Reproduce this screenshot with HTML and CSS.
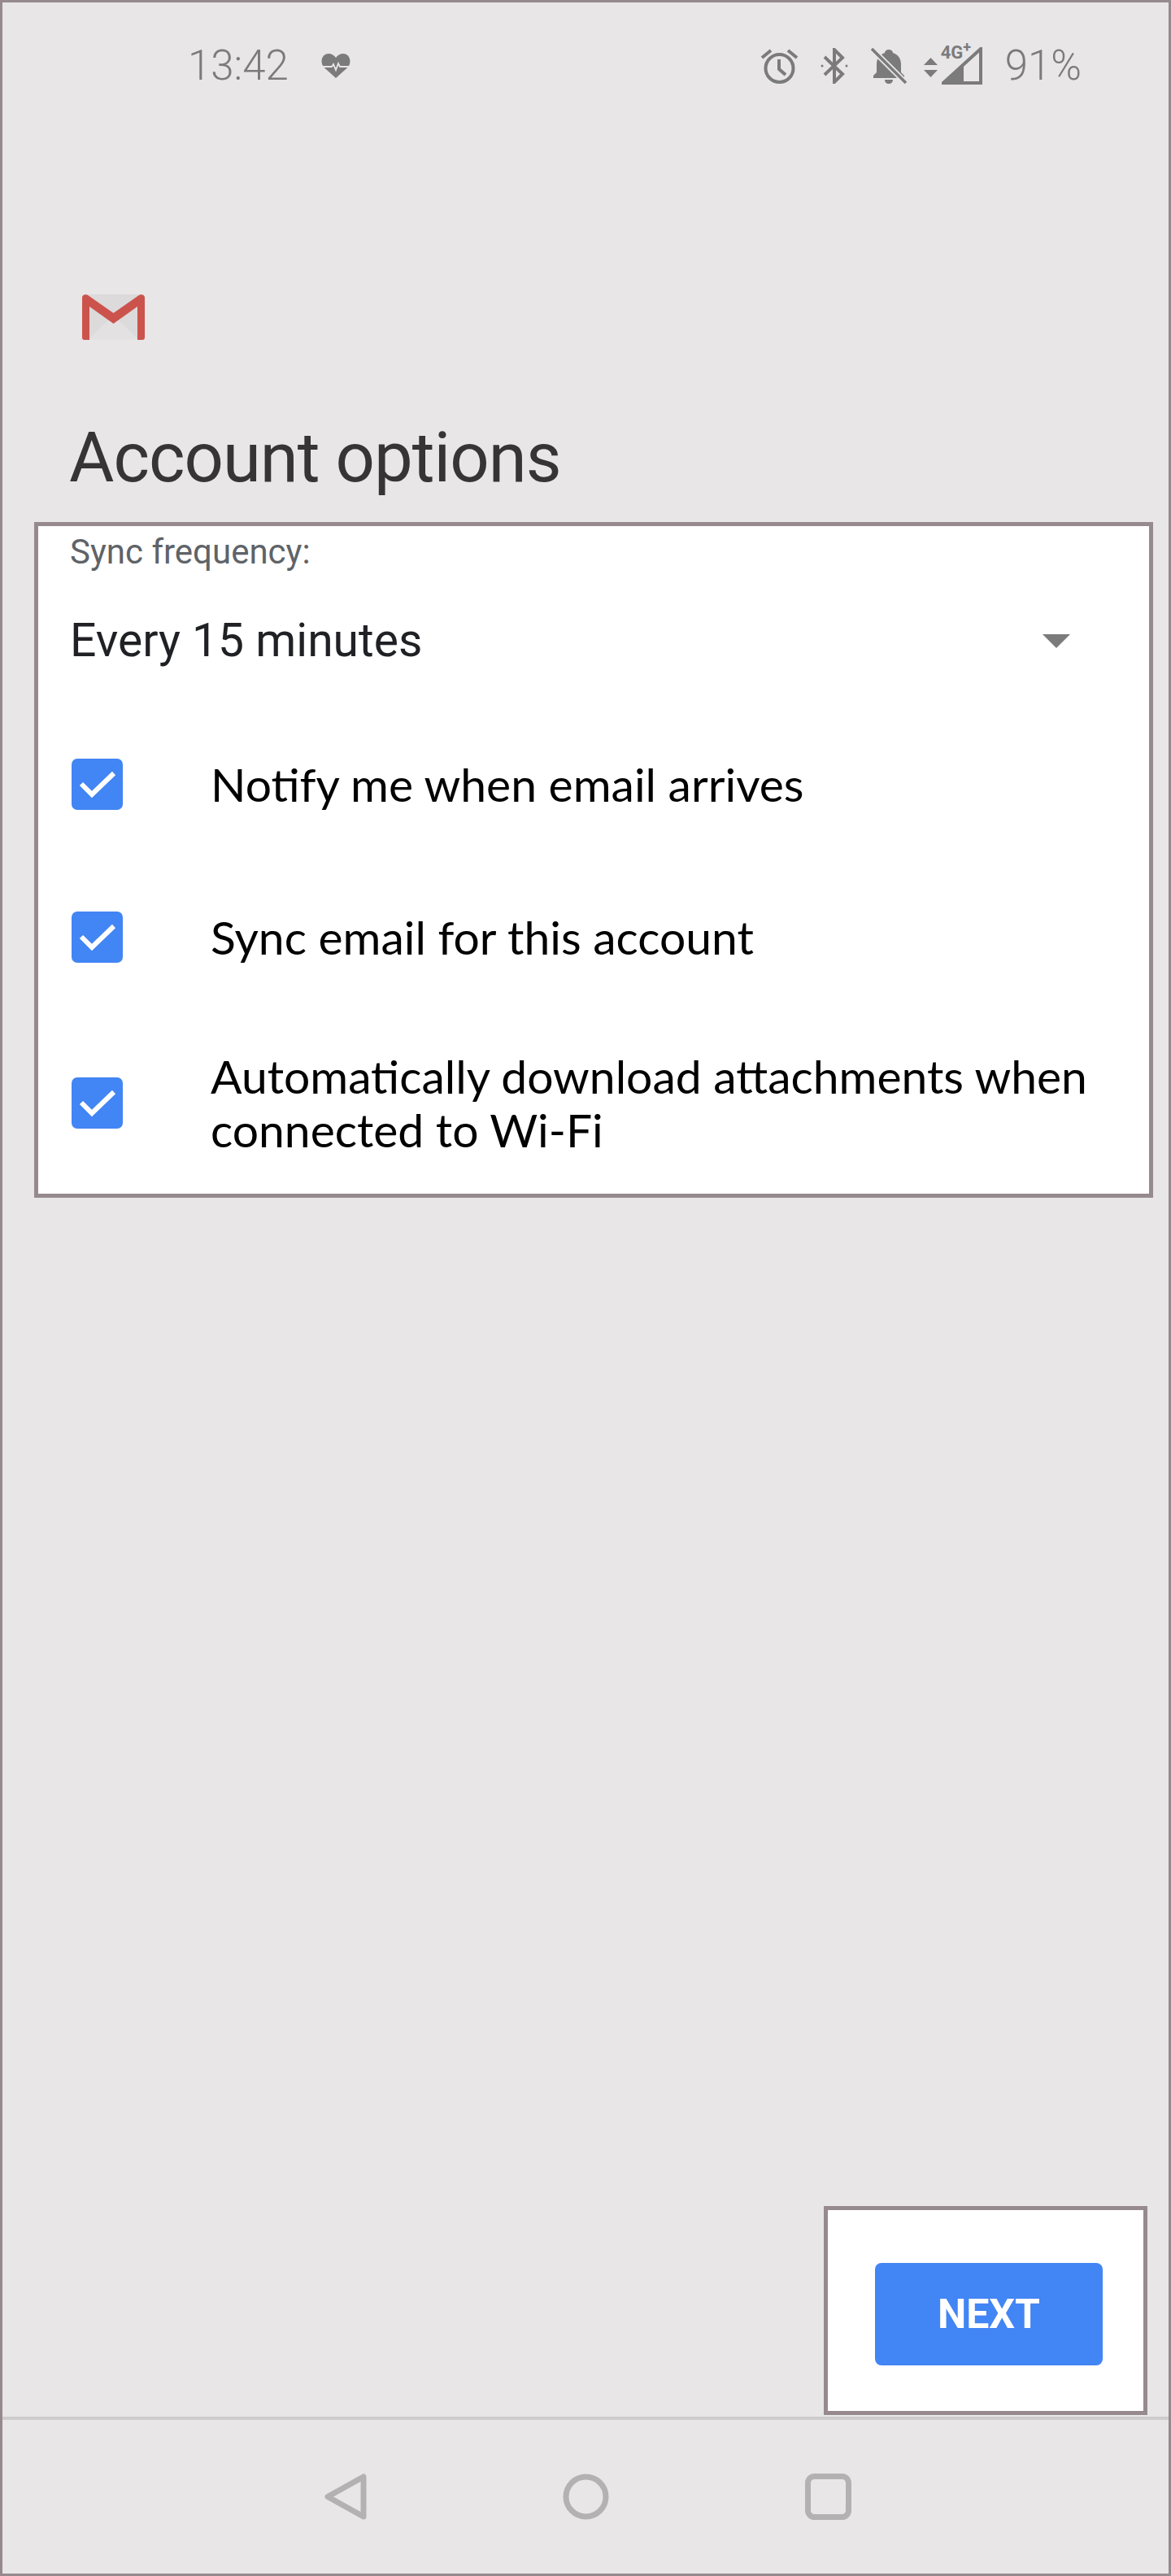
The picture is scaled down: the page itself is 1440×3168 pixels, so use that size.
FILE: index.html
```html
<!DOCTYPE html>
<html lang="en">
<head>
    <meta charset="UTF-8">
    <meta name="viewport" content="width=device-width, initial-scale=1.0">
    <title>Account options</title>
    <link rel="stylesheet" href="styles.css">
</head>
<body>
    <div class="screen">
        <!-- Status bar -->
        <div class="status-bar">
            <div class="status-left">
                <span class="status-text">13:42</span>
                <svg class="icon-heart" viewBox="0 0 36 32">
                    <path d="M18 31 3 17.500C-2 11 1 1 9 1c4 0 7 2 9 5 2-3 5-5 9-5 8 0 11 10 6 16.500z" fill="#7b7b7b"/>
                    <path d="M1 17h12l2-3 3 7 3-8 2 4h14" fill="none" stroke="#e8e6e7" stroke-width="1.800"/>
                </svg>
            </div>
            <div class="status-right">
                <svg class="icon-alarm" viewBox="0 0 47 44" fill="none" stroke="#7b7b7b" stroke-width="4">
                    <circle cx="23.500" cy="25" r="17"/>
                    <path d="M23 14v12l8 7M2 12 13 3M45 12 34 3"/>
                </svg>
                <svg class="icon-bt" viewBox="0 0 36 44" fill="none" stroke="#7b7b7b" stroke-width="4">
                    <path d="M6 11 28 32 18 42V2l10 10L6 33"/>
                    <circle cx="3" cy="22" r="1.500" fill="#7b7b7b" stroke="none"/>
                    <circle cx="33" cy="22" r="1.500" fill="#7b7b7b" stroke="none"/>
                </svg>
                <svg class="icon-bell" viewBox="0 0 44 44">
                    <path d="M22 2c-3 0-5 2-5 4-7 2-10 8-10 14v10l-4 4v3h38v-3l-4-4V20c0-6-3-12-10-14 0-2-2-4-5-4zM17 39h10c0 3-2 5-5 5s-5-2-5-5z" fill="#7b7b7b"/>
                    <path d="M2 2 42 42" stroke="#e8e6e7" stroke-width="7"/>
                    <path d="M1 1 43 43" stroke="#7b7b7b" stroke-width="3.500"/>
                </svg>
                <div class="signal">
                    <svg class="icon-arrows" viewBox="0 0 17 24">
                        <path d="M8.500 0 17 9H0zM8.500 24 0 15h17z" fill="#7b7b7b"/>
                    </svg>
                    <div class="signal-bars">
                        <span class="network">4G<sup>+</sup></span>
                        <svg class="icon-signal" viewBox="0 0 50 46">
                            <path d="M48 2v42H2z" fill="none" stroke="#7b7b7b" stroke-width="4"/>
                            <path d="M2 44 27 20v24z" fill="#7b7b7b"/>
                        </svg>
                    </div>
                </div>
                <span class="status-text">91%</span>
            </div>
        </div>

        <!-- Header -->
        <svg class="gmail-logo" viewBox="0 0 77 56">
            <rect x="0" y="0" width="77" height="56" rx="3" fill="#dcdada"/>
            <path d="M7 56 38.500 26 70 56z" fill="#e3e1e1"/>
            <path d="M0 4V53c0 2 1 3 3 3H9V15l29.500 21L68 15V56h6c2 0 3-1 3-3V4c0-3-4-5-7-3L38.500 23 7 1C4-1 0 1 0 4z" fill="#cb534c"/>
        </svg>
        <h1 class="title">Account options</h1>

        <!-- Options card -->
        <div class="options-card">
            <div class="sync-label">Sync frequency:</div>
            <div class="sync-select">
                <span>Every 15 minutes</span>
                <div class="select-arrow"></div>
            </div>
            <div class="option-row first">
                <div class="checkbox"><svg viewBox="0 0 63 63"><path d="M12 31 25 44 52 18" fill="none" stroke="#fff" stroke-width="6"/></svg></div>
                <div class="option-text">Notify me when email arrives</div>
            </div>
            <div class="option-row second">
                <div class="checkbox"><svg viewBox="0 0 63 63"><path d="M12 31 25 44 52 18" fill="none" stroke="#fff" stroke-width="6"/></svg></div>
                <div class="option-text">Sync email for this account</div>
            </div>
            <div class="option-row third">
                <div class="checkbox"><svg viewBox="0 0 63 63"><path d="M12 31 25 44 52 18" fill="none" stroke="#fff" stroke-width="6"/></svg></div>
                <div class="option-text">Automatically download attachments when connected to Wi-Fi</div>
            </div>
        </div>

        <div class="spacer"></div>

        <!-- Next button -->
        <div class="next-box">
            <button class="next-btn">NEXT</button>
        </div>

        <!-- Navigation bar -->
        <div class="nav-bar">
            <svg class="nav-icon back" viewBox="0 0 52 57" fill="none" stroke="#b3b1b2" stroke-width="7" stroke-linejoin="round">
                <path d="M48 4V53L4 28.500z"/>
            </svg>
            <svg class="nav-icon" viewBox="0 0 55 57" fill="none" stroke="#b3b1b2" stroke-width="7">
                <circle cx="27.500" cy="28.500" r="24.500"/>
            </svg>
            <svg class="nav-icon" viewBox="0 0 57 57" fill="none" stroke="#b3b1b2" stroke-width="7">
                <rect x="3.500" y="3.500" width="50" height="50" rx="8"/>
            </svg>
        </div>
    </div>
</body>
</html>
```

FILE: styles.css
```css
/* General Styling */
* {
    box-sizing: border-box;
}

body {
    margin: 0;
    font-family: 'Roboto', sans-serif;
    background-color: #e8e6e7;
}

.screen {
    height: 3168px;
    border: 3px solid #968a8e;
    display: flex;
    flex-direction: column;
}

.spacer {
    flex: 1;
}

/* Status Bar */
.status-bar {
    display: flex;
    justify-content: space-between;
    align-items: center;
    height: 74px;
    margin-top: 41px;
    padding: 0 107px 0 228px;
    color: #7b7b7b;
}

.status-left,
.status-right {
    display: flex;
    align-items: center;
}

.status-text {
    font-weight: 300;
    font-size: 51px;
    line-height: 60px;
}

.icon-heart {
    width: 36px;
    height: 32px;
    margin-left: 40px;
}

.icon-alarm {
    width: 47px;
    height: 44px;
    margin-right: 26px;
}

.icon-bt {
    width: 36px;
    height: 44px;
    margin-right: 27px;
}

.icon-bell {
    width: 44px;
    height: 44px;
    margin-right: 21px;
}

.signal {
    display: flex;
    align-items: center;
    margin-right: 28px;
}

.icon-arrows {
    width: 17px;
    height: 24px;
    margin-top: 4px;
    margin-right: 5px;
}

.signal-bars {
    position: relative;
    width: 50px;
    height: 46px;
}

.icon-signal {
    width: 50px;
    height: 46px;
    display: block;
}

/* sits on top of the signal triangle */
.network {
    position: absolute;
    left: -1px;
    top: -6px;
    font-weight: 700;
    font-size: 22px;
    line-height: 26px;
    color: #7b7b7b;
}

.network sup {
    font-size: 18px;
    line-height: 0;
}

/* Header */
.gmail-logo {
    width: 77px;
    height: 56px;
    margin: 244px 0 0 98px;
    flex: none;
}

.title {
    margin: 95px 0 0 82px;
    font-weight: 400;
    font-size: 85px;
    line-height: 100px;
    letter-spacing: -1px;
    color: #363435;
}

/* Options Card */
.options-card {
    margin: 29px 19px 0 39px;
    height: 831px;
    background-color: #ffffff;
    border: 5px solid #968a8e;
    padding: 0 0 0 39px;
}

.sync-label {
    margin-top: 8px;
    font-size: 42px;
    line-height: 48px;
    color: #5f6368;
}

.sync-select {
    display: flex;
    justify-content: space-between;
    align-items: center;
    margin-top: 48px;
    padding-right: 97px;
    font-size: 57px;
    line-height: 74px;
    color: #202124;
}

.select-arrow {
    width: 0;
    height: 0;
    border-left: 17px solid transparent;
    border-right: 17px solid transparent;
    border-top: 17px solid #7b7b7b;
}

.option-row {
    display: flex;
    align-items: center;
    min-height: 66px;
}

.option-row.first {
    margin-top: 106px;
}

.option-row.second {
    margin-top: 122px;
}

.option-row.third {
    margin-top: 105px;
}

.checkbox {
    flex: none;
    width: 63px;
    height: 63px;
    margin-left: 2px;
    border-radius: 7px;
    background-color: #4285f4;
}

.checkbox svg {
    display: block;
}

.option-text {
    margin-left: 108px;
    font-family: 'Lato', sans-serif;
    font-size: 57px;
    line-height: 66px;
    color: #000000;
}

/* Next Button */
.next-box {
    align-self: flex-end;
    width: 398px;
    height: 257px;
    margin-right: 26px;
    background-color: #ffffff;
    border: 5px solid #968a8e;
    display: flex;
    justify-content: center;
    align-items: center;
}

.next-btn {
    width: 280px;
    height: 126px;
    margin-left: 8px;
    margin-top: 9px;
    border: none;
    border-radius: 8px;
    background-color: #4285f4;
    color: #ffffff;
    font-family: 'Roboto', sans-serif;
    font-weight: bold;
    font-size: 50px;
}

/* Navigation Bar */
.nav-bar {
    height: 193px;
    margin-top: 2px;
    border-top: 4px solid #cfcccd;
    display: flex;
    justify-content: center;
    align-items: center;
    gap: 241px;
    padding-left: 6px;
}

.nav-icon {
    width: 57px;
    height: 57px;
}

.nav-icon.back {
    width: 52px;
}
```
